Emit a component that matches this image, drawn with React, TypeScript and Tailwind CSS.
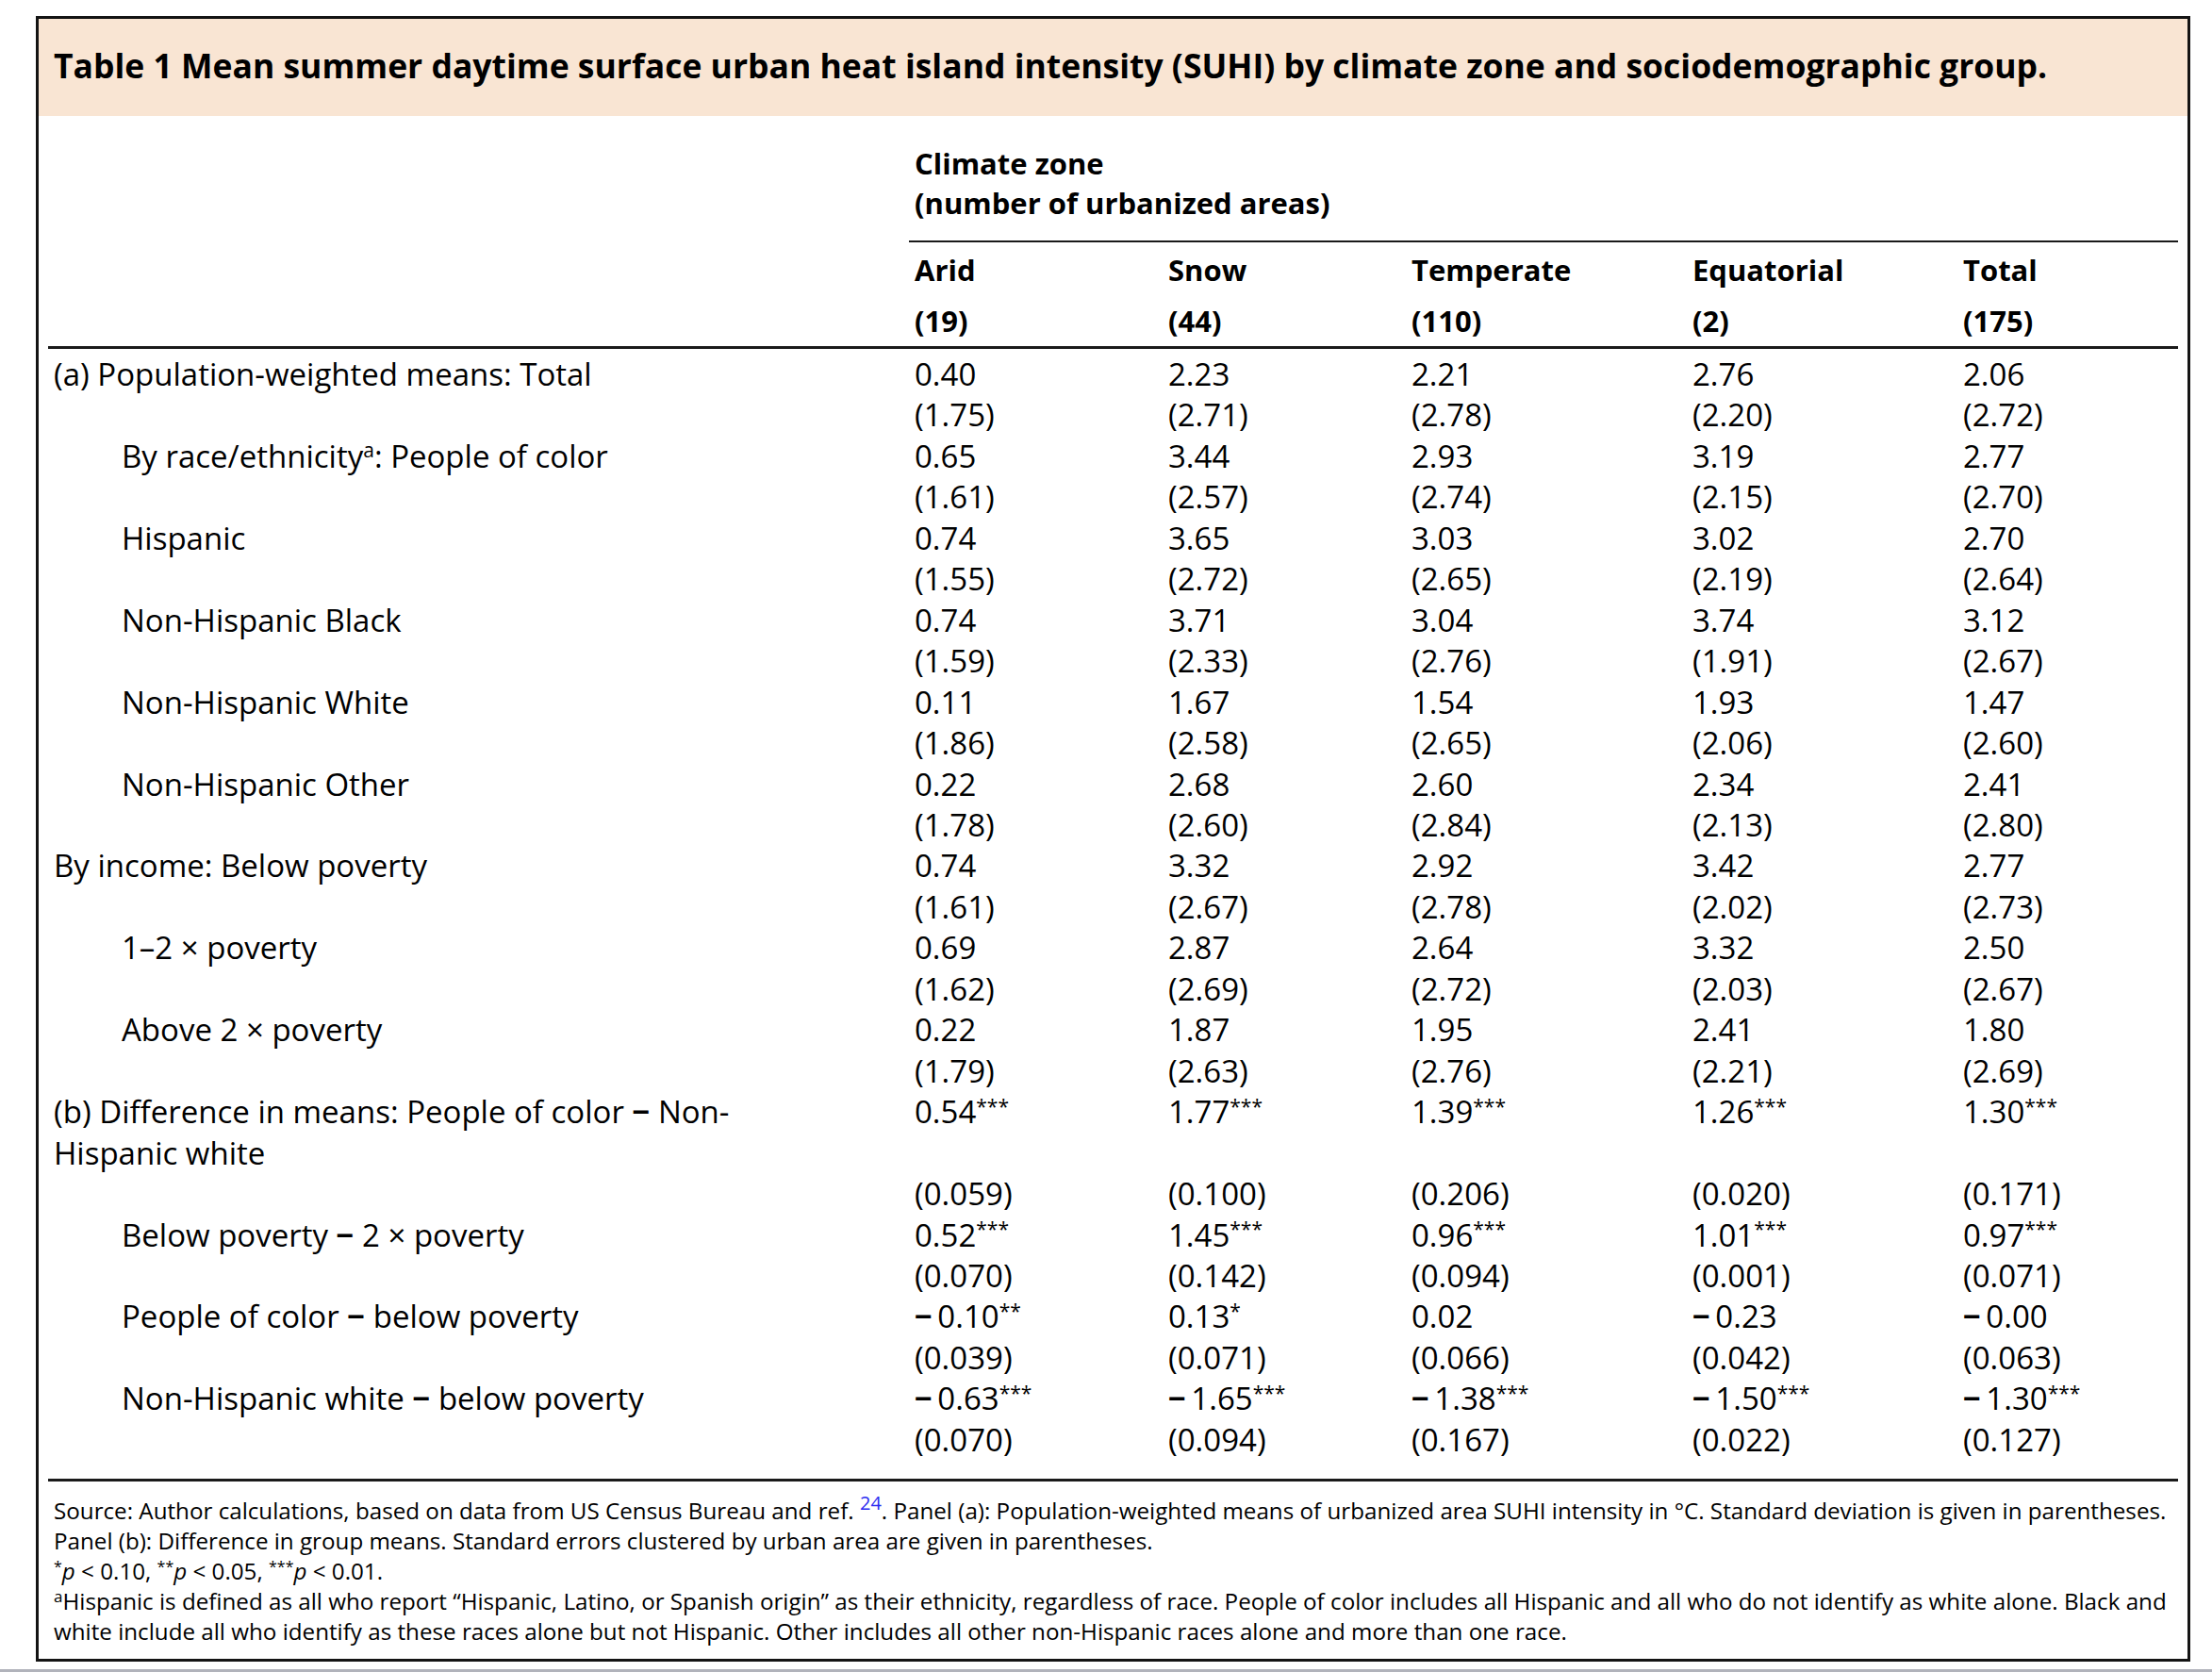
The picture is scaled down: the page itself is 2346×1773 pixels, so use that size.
import React from "react"

const zones = [
  { name: "Arid", n: "(19)" },
  { name: "Snow", n: "(44)" },
  { name: "Temperate", n: "(110)" },
  { name: "Equatorial", n: "(2)" },
  { name: "Total", n: "(175)" },
]

type Row = {
  label: React.ReactNode
  indent?: boolean
  wrap?: boolean
  vals: string[]
  errs: string[]
}

// panel (a) means, panel (b) differences
const rows: Row[] = [
  {
    label: "(a) Population-weighted means: Total",
    vals: ["0.40", "2.23", "2.21", "2.76", "2.06"],
    errs: ["(1.75)", "(2.71)", "(2.78)", "(2.20)", "(2.72)"],
  },
  {
    label: (
      <>
        By race/ethnicity<sup className="text-[21px]">a</sup>: People of color
      </>
    ),
    indent: true,
    vals: ["0.65", "3.44", "2.93", "3.19", "2.77"],
    errs: ["(1.61)", "(2.57)", "(2.74)", "(2.15)", "(2.70)"],
  },
  {
    label: "Hispanic",
    indent: true,
    vals: ["0.74", "3.65", "3.03", "3.02", "2.70"],
    errs: ["(1.55)", "(2.72)", "(2.65)", "(2.19)", "(2.64)"],
  },
  {
    label: "Non-Hispanic Black",
    indent: true,
    vals: ["0.74", "3.71", "3.04", "3.74", "3.12"],
    errs: ["(1.59)", "(2.33)", "(2.76)", "(1.91)", "(2.67)"],
  },
  {
    label: "Non-Hispanic White",
    indent: true,
    vals: ["0.11", "1.67", "1.54", "1.93", "1.47"],
    errs: ["(1.86)", "(2.58)", "(2.65)", "(2.06)", "(2.60)"],
  },
  {
    label: "Non-Hispanic Other",
    indent: true,
    vals: ["0.22", "2.68", "2.60", "2.34", "2.41"],
    errs: ["(1.78)", "(2.60)", "(2.84)", "(2.13)", "(2.80)"],
  },
  {
    label: "By income: Below poverty",
    vals: ["0.74", "3.32", "2.92", "3.42", "2.77"],
    errs: ["(1.61)", "(2.67)", "(2.78)", "(2.02)", "(2.73)"],
  },
  {
    label: "1–2 × poverty",
    indent: true,
    vals: ["0.69", "2.87", "2.64", "3.32", "2.50"],
    errs: ["(1.62)", "(2.69)", "(2.72)", "(2.03)", "(2.67)"],
  },
  {
    label: "Above 2 × poverty",
    indent: true,
    vals: ["0.22", "1.87", "1.95", "2.41", "1.80"],
    errs: ["(1.79)", "(2.63)", "(2.76)", "(2.21)", "(2.69)"],
  },
  {
    label: (
      <>
        (b) Difference in means: People of color <b className="font-bold">−</b> Non-
        <br />
        Hispanic white
      </>
    ),
    wrap: true,
    vals: ["0.54***", "1.77***", "1.39***", "1.26***", "1.30***"],
    errs: ["(0.059)", "(0.100)", "(0.206)", "(0.020)", "(0.171)"],
  },
  {
    label: (
      <>
        Below poverty <b className="font-bold">−</b> 2 × poverty
      </>
    ),
    indent: true,
    vals: ["0.52***", "1.45***", "0.96***", "1.01***", "0.97***"],
    errs: ["(0.070)", "(0.142)", "(0.094)", "(0.001)", "(0.071)"],
  },
  {
    label: (
      <>
        People of color <b className="font-bold">−</b> below poverty
      </>
    ),
    indent: true,
    vals: ["−0.10**", "0.13*", "0.02", "−0.23", "−0.00"],
    errs: ["(0.039)", "(0.071)", "(0.066)", "(0.042)", "(0.063)"],
  },
  {
    label: (
      <>
        Non-Hispanic white <b className="font-bold">−</b> below poverty
      </>
    ),
    indent: true,
    vals: ["−0.63***", "−1.65***", "−1.38***", "−1.50***", "−1.30***"],
    errs: ["(0.070)", "(0.094)", "(0.167)", "(0.022)", "(0.127)"],
  },
]

const grid = "grid grid-cols-[913px_269px_258px_298px_287px_234px]"

function Value({ text }: { text: string }) {
  const neg = text.startsWith("−")
  const body = neg ? text.slice(1) : text
  const num = body.replace(/\*+$/, "")
  const stars = body.slice(num.length)
  return (
    <span>
      {neg && (
        <>
          <b className="font-bold">−</b>&thinsp;
        </>
      )}
      {num}
      {stars && <sup className="text-[21px]">{stars}</sup>}
    </span>
  )
}

export default function App() {
  return (
    <div className="min-h-screen bg-white text-black" style={{ fontFamily: "'Open Sans', 'Noto Sans', sans-serif" }}>
      <div className="pt-[17px] pl-[38px]">
        <div className="w-[2285px] h-[1745px] border-[3px] border-[#141414] flex flex-col">
          {/* Caption */}
          <div className="h-[103px] bg-[#f9e5d3] pt-[29px] pl-[16px]">
            <h1 className="text-[35.5px] leading-[40px] font-bold whitespace-nowrap">
              Table 1 Mean summer daytime surface urban heat island intensity (SUHI) by climate zone and
              sociodemographic group.
            </h1>
          </div>

          <div className="px-[10px]">
            {/* Column heads */}
            <div className={grid + " font-bold text-[31px]"}>
              <div />
              <div className="col-span-5">
                <div className="pt-[29px] pb-[19px] pl-[6px] leading-[42px]">
                  <div>Climate zone</div>
                  <div>(number of urbanized areas)</div>
                </div>
                <div className="h-[2px] bg-[#1a1a1a]" />
              </div>
            </div>
            <div className={grid + " font-bold text-[31px] leading-[54px] pt-[2px]"}>
              <div />
              {zones.map((z) => (
                <div key={z.name} className="pl-[6px]">
                  <div>{z.name}</div>
                  <div>{z.n}</div>
                </div>
              ))}
            </div>
            <div className="h-[3px] bg-[#1a1a1a]" />

            {/* Body */}
            <div className="pt-[5px] text-[33px] leading-[43.45px]">
              {rows.map((r, i) => (
                <div key={i} className={grid}>
                  <div className={r.indent ? "pl-[78px]" : "pl-[6px]"}>{r.label}</div>
                  {r.vals.map((v, j) => (
                    <div key={j} className="pl-[6px] whitespace-nowrap">
                      <div>
                        <Value text={v} />
                      </div>
                      {r.wrap && <div>&nbsp;</div>}
                      <div>{r.errs[j]}</div>
                    </div>
                  ))}
                </div>
              ))}
            </div>
            <div className="mt-[20px] h-[3px] bg-[#1a1a1a]" />

            {/* Notes */}
            <div className="pt-[15px] pl-[6px] text-[24.2px] leading-[32px] whitespace-nowrap">
              <div>
                Source: Author calculations, based on data from US Census Bureau and ref.{" "}
                <sup className="text-[20px] text-[#2b2bf0]">24</sup>. Panel (a): Population-weighted means of
                urbanized area SUHI intensity in °C. Standard deviation is given in parentheses.
              </div>
              <div>Panel (b): Difference in group means. Standard errors clustered by urban area are given in parentheses.</div>
              <div>
                <sup className="text-[16px]">*</sup>
                <i>p</i> &lt; 0.10, <sup className="text-[16px]">**</sup>
                <i>p</i> &lt; 0.05, <sup className="text-[16px]">***</sup>
                <i>p</i> &lt; 0.01.
              </div>
              <div>
                <sup className="text-[17px]">a</sup>Hispanic is defined as all who report “Hispanic, Latino, or Spanish
                origin” as their ethnicity, regardless of race. People of color includes all Hispanic and all who do not
                identify as white alone. Black and
              </div>
              <div>
                white include all who identify as these races alone but not Hispanic. Other includes all other
                non-Hispanic races alone and more than one race.
              </div>
            </div>
          </div>
        </div>
      </div>
      <div className="mt-[8px] h-[3px] bg-[#b1b3bb]" />
    </div>
  )
}
